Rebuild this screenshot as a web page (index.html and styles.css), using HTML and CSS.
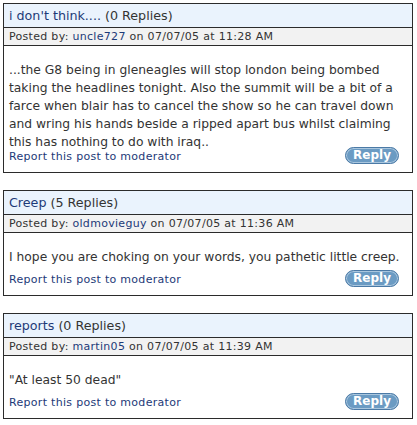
FILE: index.html
```html
<!DOCTYPE html>
<html lang="en">
  <head>
    <meta charset="UTF-8" />
    <title>Forum posts</title>
    <link rel="stylesheet" href="styles.css">
  </head>
  <body>
    <div class="posts">
      <div class="post">
        <div class="post-title"><a href="#">i don't think....</a> (0 Replies)</div>
        <div class="post-meta">Posted by: <a href="#">uncle727</a> on 07/07/05 at 11:28 AM</div>
        <div class="post-body long">
          <p>...the G8 being in gleneagles will stop london being bombed taking the headlines tonight. Also the summit will be a bit of a farce when blair has to cancel the show so he can travel down and wring his hands beside a ripped apart bus whilst claiming this has nothing to do with iraq..</p>
          <div class="post-footer">
            <a href="#" class="report">Report this post to moderator</a>
            <button class="reply">Reply</button>
          </div>
        </div>
      </div>

      <div class="post">
        <div class="post-title"><a href="#">Creep</a> (5 Replies)</div>
        <div class="post-meta">Posted by: <a href="#">oldmovieguy</a> on 07/07/05 at 11:36 AM</div>
        <div class="post-body">
          <p>I hope you are choking on your words, you pathetic little creep.</p>
          <div class="post-footer">
            <a href="#" class="report">Report this post to moderator</a>
            <button class="reply">Reply</button>
          </div>
        </div>
      </div>

      <div class="post">
        <div class="post-title"><a href="#">reports</a> (0 Replies)</div>
        <div class="post-meta">Posted by: <a href="#">martin05</a> on 07/07/05 at 11:39 AM</div>
        <div class="post-body">
          <p>"At least 50 dead"</p>
          <div class="post-footer">
            <a href="#" class="report">Report this post to moderator</a>
            <button class="reply">Reply</button>
          </div>
        </div>
      </div>
    </div>
  </body>
</html>
```

FILE: styles.css
```css
* {
  margin: 0;
  padding: 0;
  box-sizing: border-box;
  font-family: "DejaVu Sans", Verdana, sans-serif;
}

body {
  background: #fff;
  color: #333;
}

a {
  color: #1d3a78;
  text-decoration: none;
}

.posts {
  display: flex;
  flex-direction: column;
  gap: 17px;
  padding: 3px 4px 3px 3px;
}

.post {
  border: 1px solid #2b2b2b;
}

.post-title {
  background: #eaf3fd;
  border-bottom: 1px solid #2b2b2b;
  padding: 0 5px;
  height: 24px;
  line-height: 23px;
  font-size: 12.7px;
}

.post-meta {
  background: #f2f2f2;
  border-bottom: 1px solid #2b2b2b;
  padding: 0 5px;
  height: 18px;
  line-height: 17px;
  font-size: 11px;
  letter-spacing: 0.3px;
}

.post-body {
  padding: 15px 8px 8px 5px;
}

.post-body p {
  font-size: 12.3px;
  line-height: 18px;
}

.post-footer {
  display: flex;
  justify-content: space-between;
  align-items: flex-end;
  margin-top: 4px;
}

.long .post-footer {
  margin-top: -4px;
}

.report {
  font-size: 11px;
  line-height: 14px;
  letter-spacing: 0.3px;
}

.reply {
  width: 54px;
  height: 17px;
  margin-right: 5px;
  border-radius: 9px;
  border: 1px solid #4b7aa6;
  box-shadow: inset 0 0 0 1px #a9c6de;
  background: #6b9bc3;
  color: #fff;
  font-size: 12px;
  font-weight: bold;
  line-height: 15px;
}
```
